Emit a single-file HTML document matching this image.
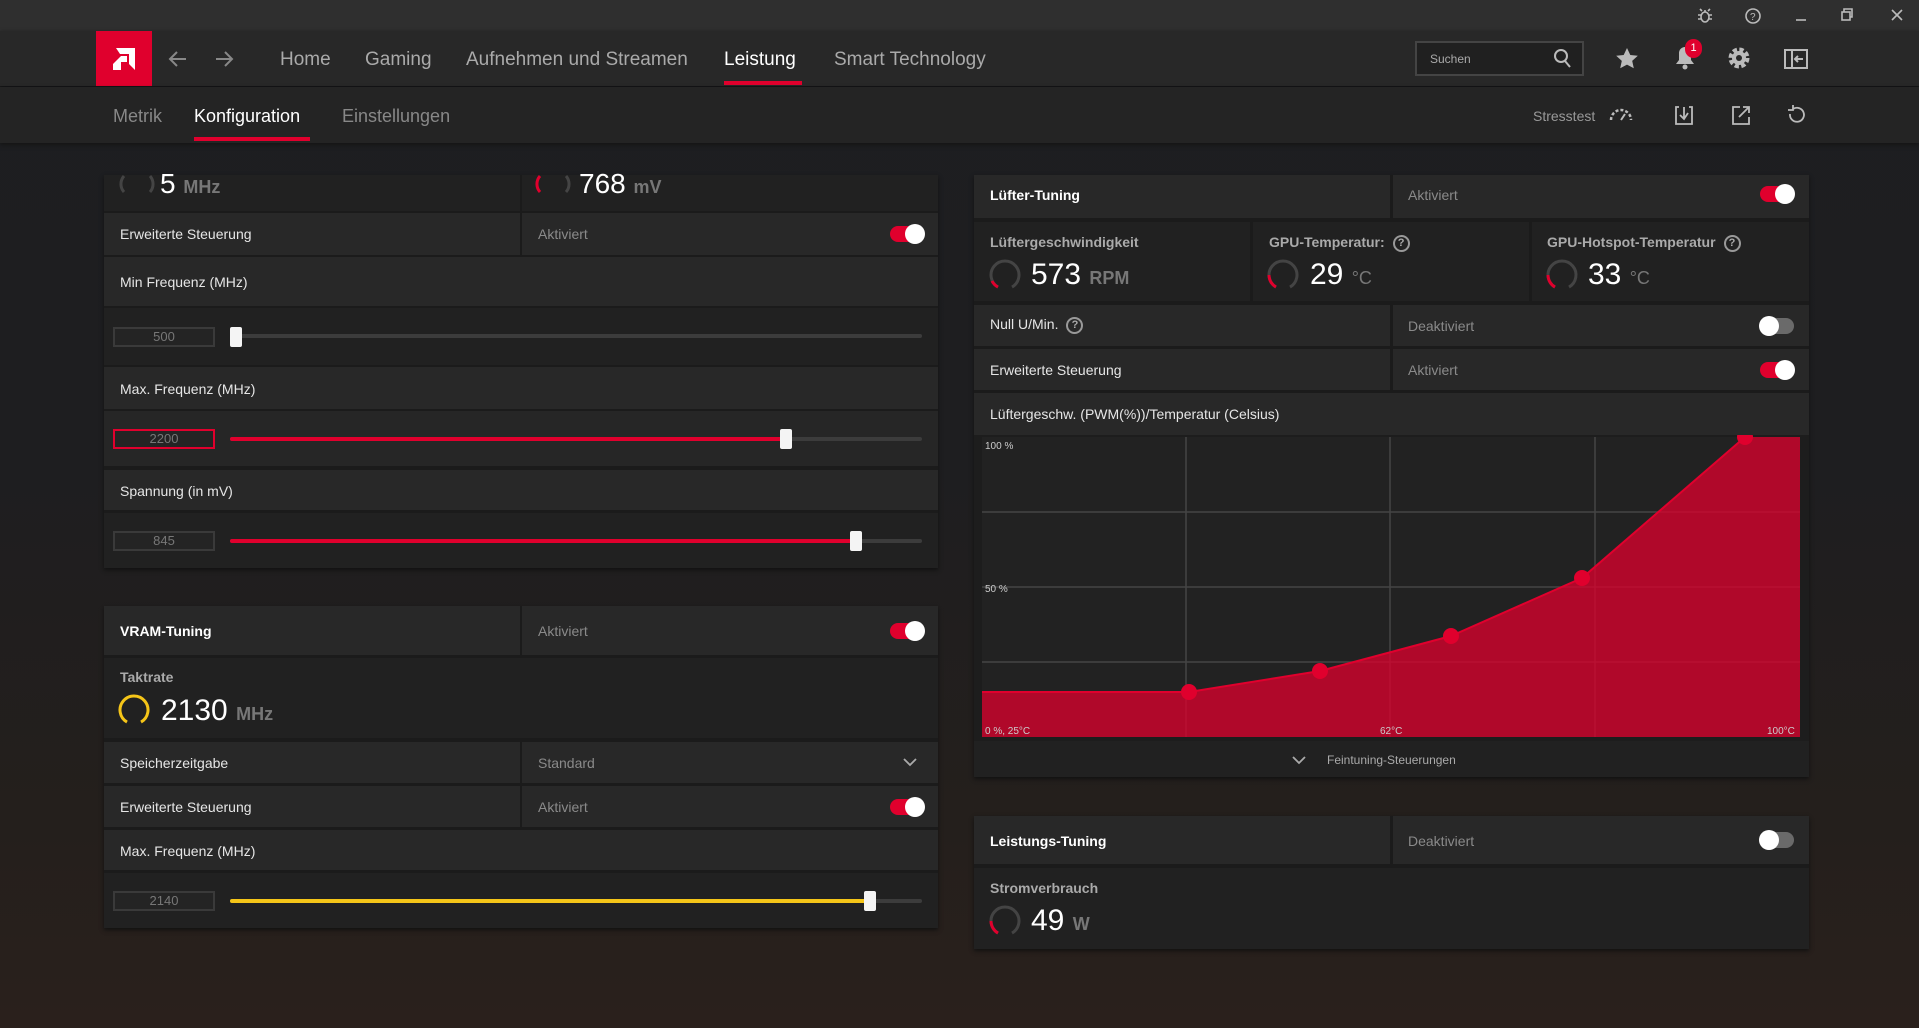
<!DOCTYPE html><html><head><meta charset="utf-8"><style>
*{margin:0;padding:0;box-sizing:border-box}
body{width:1919px;height:1028px;overflow:hidden;font-family:"Liberation Sans",sans-serif;background:linear-gradient(180deg,#1d1e21 0%,#1e1e20 45%,#241f1c 80%,#2a201c 100%);position:relative;color:#ddd}
.a{position:absolute}
.row{position:absolute;background:#282828}
.dk{background:#212121}
.t{position:absolute;font-size:14px;color:#e6e6e6;white-space:nowrap}
.g{color:#8a8a8a}
.b{font-weight:bold;color:#fff}
.tg{position:absolute;width:34px;height:16px;border-radius:8px}
.tg.on{background:#e0002d}.tg.off{background:#6a6a6a}
.tg i{position:absolute;top:-2px;width:20px;height:20px;border-radius:50%;background:#fff}
.tg.on i{right:-1px}.tg.off i{left:-1px}
.box{position:absolute;width:102px;height:20px;border:2px solid #3a3a3a;background:#242424;color:#777;font-size:13px;text-align:center;line-height:16px}
.tr{position:absolute;height:4px;background:#3c3c3c;border-radius:2px}
.fl{position:absolute;height:4px;border-radius:2px}
.th{position:absolute;width:12px;height:20px;background:#f4f4f4;border-radius:2px}
.big{position:absolute;font-size:30px;color:#fff}
.big span{font-size:18px;color:#777;font-weight:bold}
.lbl{position:absolute;font-size:14px;font-weight:bold;color:#aaa}
.q{display:inline-block;width:17px;height:17px;border:2px solid #999;border-radius:50%;font-size:11px;text-align:center;line-height:13px;color:#aaa;font-weight:bold;vertical-align:middle;margin-left:8px}
</style></head><body>
<div class="a" style="left:0;top:0;width:1919px;height:31px;background:#2f2f2f"></div>
<svg class="a" style="left:1696px;top:6px" width="180" height="20" viewBox="0 0 180 20" fill="none" stroke="#bbb" stroke-width="1.6">
<ellipse cx="9" cy="11" rx="4" ry="5"/><path d="M9 6V4M5 9H2M5 13H2M13 9h3M13 13h3M6 5l-2-2M12 5l2-2"/>
<circle cx="57" cy="10" r="7"/><text x="54" y="14" font-size="10" fill="#bbb" stroke="none" font-family="Liberation Sans">?</text>
<path d="M100 14h10"/><rect x="146" y="6" width="8" height="8"/><path d="M148 6V3h8v8h-2"/>
</svg>
<svg class="a" style="left:1890px;top:8px" width="14" height="14" fill="none" stroke="#bbb" stroke-width="1.6"><path d="M2 2l10 10M12 2L2 12"/></svg>
<div class="a" style="left:0;top:31px;width:1919px;height:55px;background:#282828;box-shadow:0 2px 4px #111"></div>
<div class="a" style="left:96px;top:31px;width:56px;height:55px;background:#e0002d"></div>
<svg class="a" style="left:110px;top:45px" width="28" height="28" viewBox="0 0 28 28"><path d="M6 3h19v22l-6-6V9h-9z" fill="#fff"/><path d="M11 11h6v6h-6z M11 11l-8 8v6h8v-8" fill="#fff"/></svg>
<svg class="a" style="left:166px;top:48px" width="70" height="22" viewBox="0 0 70 22" fill="none" stroke="#888" stroke-width="2"><path d="M20 11H4M11 4l-7 7 7 7"/><path d="M50 11h16M59 4l7 7-7 7"/></svg>
<div class="a" style="left:280px;top:49px;font-size:19px;color:#aaa">Home</div>
<div class="a" style="left:365px;top:49px;font-size:19px;color:#aaa">Gaming</div>
<div class="a" style="left:466px;top:49px;font-size:19px;color:#aaa">Aufnehmen und Streamen</div>
<div class="a" style="left:724px;top:49px;font-size:19px;color:#fff">Leistung</div>
<div class="a" style="left:724px;top:81px;width:78px;height:4px;background:#e0002d"></div>
<div class="a" style="left:834px;top:49px;font-size:19px;color:#aaa">Smart Technology</div>
<div class="a" style="left:1415px;top:41px;width:169px;height:35px;border:2px solid #444;background:#202020"></div>
<div class="a" style="left:1430px;top:52px;font-size:12px;color:#aaa">Suchen</div>
<svg class="a" style="left:1553px;top:48px" width="20" height="22" fill="none" stroke="#bbb" stroke-width="2"><circle cx="8" cy="8" r="6"/><path d="M12 13l5 6"/></svg>
<svg class="a" style="left:1615px;top:47px" width="24" height="24" viewBox="0 0 24 24"><path d="M12 1l3.3 7 7.5.8-5.6 5.1 1.6 7.4L12 17.6 5.2 21.3l1.6-7.4L1.2 8.8 8.7 8z" fill="#bbb"/></svg>
<svg class="a" style="left:1672px;top:42px" width="26" height="30" viewBox="0 0 26 30"><path d="M4 22h18l-3-4v-7a6 6 0 0 0-12 0v7z" fill="#bbb"/><circle cx="13" cy="25" r="2.5" fill="#bbb"/></svg>
<div class="a" style="left:1685px;top:39px;width:17px;height:19px;border-radius:9px;background:#e0002d;color:#fff;font-size:11px;text-align:center;line-height:19px">1</div>
<svg class="a" style="left:1726px;top:45px" width="26" height="26" viewBox="0 0 26 26"><circle cx="13" cy="13" r="8" fill="none" stroke="#bbb" stroke-width="5" stroke-dasharray="4 2.3"/><circle cx="13" cy="13" r="7" fill="#bbb"/><circle cx="13" cy="13" r="3" fill="#282828"/></svg>
<svg class="a" style="left:1783px;top:48px" width="26" height="22" fill="none" stroke="#bbb" stroke-width="2"><rect x="2" y="2" width="22" height="18"/><path d="M9 2v18M20 11h-8M15 8l-3 3 3 3"/></svg>
<div class="a" style="left:0;top:87px;width:1919px;height:56px;background:#242424;box-shadow:0 2px 4px #151515"></div>
<div class="a" style="left:113px;top:106px;font-size:18px;color:#888">Metrik</div>
<div class="a" style="left:194px;top:106px;font-size:18px;color:#fff">Konfiguration</div>
<div class="a" style="left:194px;top:137px;width:116px;height:4px;background:#e0002d"></div>
<div class="a" style="left:342px;top:106px;font-size:18px;color:#888">Einstellungen</div>
<div class="a" style="left:1533px;top:108px;font-size:14px;color:#999">Stresstest</div>
<svg class="a" style="left:1608px;top:104px" width="26" height="20" fill="none" stroke="#bbb" stroke-width="2.5" stroke-dasharray="3 2"><path d="M3 16a10 10 0 0 1 20 0"/><path d="M13 16l4-6" stroke-dasharray="none" stroke-width="2"/></svg>
<svg class="a" style="left:1673px;top:104px" width="22" height="22" fill="none" stroke="#bbb" stroke-width="1.8"><path d="M6 3H3v17h16V3h-3M7 11l4 4 4-6M11 3v11"/></svg>
<svg class="a" style="left:1730px;top:104px" width="22" height="22" fill="none" stroke="#bbb" stroke-width="1.8"><path d="M10 3H3v17h16v-7M9 13l10-10M13 3h6v6"/></svg>
<svg class="a" style="left:1785px;top:104px" width="22" height="22" fill="none" stroke="#bbb" stroke-width="1.8"><path d="M5 10a7 7 0 1 0 3-5M8 1v5H3"/></svg>

<div class="a" style="left:104px;top:175px;width:834px;height:393px;background:#1b1b1b;box-shadow:0 2px 4px #111"></div>
<div class="row dk" style="left:104px;top:175px;width:416px;height:36px"></div>
<div class="row dk" style="left:522px;top:175px;width:416px;height:36px"></div>
<svg class="a" style="left:118px;top:172px" width="40" height="24" fill="none" stroke="#444" stroke-width="3"><path d="M6 4a12 12 0 0 0 0 16M32 4a12 12 0 0 1 0 16"/></svg>
<div class="big" style="left:160px;top:168px;font-size:28px">5 <span>MHz</span></div>
<svg class="a" style="left:534px;top:172px" width="40" height="24" fill="none" stroke-width="3"><path d="M6 4a12 12 0 0 0 0 16" stroke="#e0002d"/><path d="M32 4a12 12 0 0 1 0 16" stroke="#444"/></svg>
<div class="big" style="left:579px;top:168px;font-size:28px">768 <span>mV</span></div>
<div class="row" style="left:104px;top:213px;width:416px;height:42px"></div>
<div class="row" style="left:522px;top:213px;width:416px;height:42px"></div>
<div class="t" style="left:120px;top:226px">Erweiterte Steuerung</div>
<div class="t g" style="left:538px;top:226px">Aktiviert</div>
<div class="tg on" style="left:890px;top:226px"><i></i></div>
<div class="row" style="left:104px;top:257px;width:834px;height:49px"></div>
<div class="t" style="left:120px;top:274px">Min Frequenz (MHz)</div>
<div class="row dk" style="left:104px;top:308px;width:834px;height:57px"></div>
<div class="box" style="left:113px;top:327px">500</div>
<div class="tr" style="left:230px;top:334px;width:692px"></div>
<div class="th" style="left:230px;top:327px"></div>
<div class="row" style="left:104px;top:367px;width:834px;height:42px"></div>
<div class="t" style="left:120px;top:381px">Max. Frequenz (MHz)</div>
<div class="row" style="left:104px;top:411px;width:834px;height:55px;background:#262626"></div>
<div class="box" style="left:113px;top:429px;border-color:#e0002d">2200</div>
<div class="tr" style="left:230px;top:437px;width:692px"></div>
<div class="fl" style="left:230px;top:437px;width:556px;background:#e0002d"></div>
<div class="th" style="left:780px;top:429px"></div>
<div class="row" style="left:104px;top:470px;width:834px;height:40px"></div>
<div class="t" style="left:120px;top:483px">Spannung (in mV)</div>
<div class="row dk" style="left:104px;top:513px;width:834px;height:55px"></div>
<div class="box" style="left:113px;top:531px">845</div>
<div class="tr" style="left:230px;top:539px;width:692px"></div>
<div class="fl" style="left:230px;top:539px;width:626px;background:#e0002d"></div>
<div class="th" style="left:850px;top:531px"></div>

<div class="a" style="left:104px;top:606px;width:834px;height:322px;background:#1b1b1b;box-shadow:0 2px 4px #111"></div>
<div class="row" style="left:104px;top:606px;width:416px;height:49px"></div>
<div class="row" style="left:522px;top:606px;width:416px;height:49px"></div>
<div class="t b" style="left:120px;top:623px">VRAM-Tuning</div>
<div class="t g" style="left:538px;top:623px">Aktiviert</div>
<div class="tg on" style="left:890px;top:623px"><i></i></div>
<div class="row dk" style="left:104px;top:658px;width:834px;height:80px"></div>
<div class="lbl" style="left:120px;top:669px">Taktrate</div>
<svg class="a" style="left:116px;top:692px" width="36" height="36" fill="none" stroke="#f5c518" stroke-width="3"><path d="M11 30.1A14 14 0 1 1 25 30.1"/></svg>
<div class="big" style="left:161px;top:694px">2130 <span>MHz</span></div>
<div class="row" style="left:104px;top:742px;width:416px;height:41px"></div>
<div class="row" style="left:522px;top:742px;width:416px;height:41px"></div>
<div class="t" style="left:120px;top:755px">Speicherzeitgabe</div>
<div class="t g" style="left:538px;top:755px">Standard</div>
<svg class="a" style="left:902px;top:756px" width="16" height="12" fill="none" stroke="#aaa" stroke-width="1.8"><path d="M2 3l6 6 6-6"/></svg>
<div class="row" style="left:104px;top:786px;width:416px;height:41px"></div>
<div class="row" style="left:522px;top:786px;width:416px;height:41px"></div>
<div class="t" style="left:120px;top:799px">Erweiterte Steuerung</div>
<div class="t g" style="left:538px;top:799px">Aktiviert</div>
<div class="tg on" style="left:890px;top:799px"><i></i></div>
<div class="row" style="left:104px;top:830px;width:834px;height:40px"></div>
<div class="t" style="left:120px;top:843px">Max. Frequenz (MHz)</div>
<div class="row dk" style="left:104px;top:873px;width:834px;height:55px"></div>
<div class="box" style="left:113px;top:891px">2140</div>
<div class="tr" style="left:230px;top:899px;width:692px"></div>
<div class="fl" style="left:230px;top:899px;width:640px;background:#f5c518"></div>
<div class="th" style="left:864px;top:891px"></div>

<div class="a" style="left:974px;top:175px;width:835px;height:602px;background:#1b1b1b;box-shadow:0 2px 4px #111"></div>
<div class="row" style="left:974px;top:175px;width:416px;height:43px"></div>
<div class="row" style="left:1393px;top:175px;width:416px;height:43px"></div>
<div class="t b" style="left:990px;top:187px">Lüfter-Tuning</div>
<div class="t g" style="left:1408px;top:187px">Aktiviert</div>
<div class="tg on" style="left:1760px;top:186px"><i></i></div>
<div class="row dk" style="left:974px;top:222px;width:276px;height:79px"></div>
<div class="row dk" style="left:1253px;top:222px;width:276px;height:79px"></div>
<div class="row dk" style="left:1532px;top:222px;width:277px;height:79px"></div>
<div class="lbl" style="left:990px;top:234px">Lüftergeschwindigkeit</div>
<div class="lbl" style="left:1269px;top:234px">GPU-Temperatur:<span class="q">?</span></div>
<div class="lbl" style="left:1547px;top:234px">GPU-Hotspot-Temperatur<span class="q">?</span></div>
<svg class="a" style="left:987px;top:257px" width="36" height="36" fill="none" stroke-width="3"><path d="M11 30.1A14 14 0 1 1 25 30.1" stroke="#444"/><path d="M11 30.1A14 14 0 0 1 5 24" stroke="#e0002d"/></svg>
<div class="big" style="left:1031px;top:258px">573 <span>RPM</span></div>
<svg class="a" style="left:1265px;top:257px" width="36" height="36" fill="none" stroke-width="3"><path d="M11 30.1A14 14 0 1 1 25 30.1" stroke="#444"/><path d="M11 30.1A14 14 0 0 1 4 18" stroke="#e0002d"/></svg>
<div class="big" style="left:1310px;top:258px">29 <span style="font-weight:normal">°C</span></div>
<svg class="a" style="left:1544px;top:257px" width="36" height="36" fill="none" stroke-width="3"><path d="M11 30.1A14 14 0 1 1 25 30.1" stroke="#444"/><path d="M11 30.1A14 14 0 0 1 4 18" stroke="#e0002d"/></svg>
<div class="big" style="left:1588px;top:258px">33 <span style="font-weight:normal">°C</span></div>
<div class="row" style="left:974px;top:305px;width:416px;height:41px"></div>
<div class="row" style="left:1393px;top:305px;width:416px;height:41px"></div>
<div class="t" style="left:990px;top:316px">Null U/Min.<span class="q">?</span></div>
<div class="t g" style="left:1408px;top:318px">Deaktiviert</div>
<div class="tg off" style="left:1760px;top:318px"><i></i></div>
<div class="row" style="left:974px;top:349px;width:416px;height:41px"></div>
<div class="row" style="left:1393px;top:349px;width:416px;height:41px"></div>
<div class="t" style="left:990px;top:362px">Erweiterte Steuerung</div>
<div class="t g" style="left:1408px;top:362px">Aktiviert</div>
<div class="tg on" style="left:1760px;top:362px"><i></i></div>
<div class="row" style="left:974px;top:393px;width:835px;height:42px"></div>
<div class="t" style="left:990px;top:406px">Lüftergeschw. (PWM(%))/Temperatur (Celsius)</div>
<svg class="a" style="left:974px;top:435px" width="835" height="306" viewBox="974 435 835 306">
<rect x="974" y="435" width="835" height="306" fill="#1d1d1d"/>
<rect x="982" y="437" width="818" height="300" fill="#222"/>
<g stroke="#444" stroke-width="1.5"><path d="M1186 437v300M1390 437v300M1595 437v300M982 512h818M982 587h818M982 662h818"/></g>
<path d="M982 692L1189 692L1320 671L1451 636L1582 578L1745 437L1800 437L1800 737L982 737Z" fill="#e0002d" fill-opacity="0.75"/>
<path d="M982 692L1189 692L1320 671L1451 636L1582 578L1745 437" fill="none" stroke="#e0002d" stroke-width="2"/>
<g fill="#e0002d"><circle cx="1189" cy="692" r="8"/><circle cx="1320" cy="671" r="8"/><circle cx="1451" cy="636" r="8"/><circle cx="1582" cy="578" r="8"/><circle cx="1745" cy="437" r="8"/></g>
<g font-family="Liberation Sans" font-size="10" fill="#ccc"><text x="985" y="449">100 %</text><text x="985" y="592">50 %</text><text x="985" y="734">0 %, 25°C</text><text x="1380" y="734">62°C</text><text x="1767" y="734">100°C</text></g>
</svg>
<div class="row dk" style="left:974px;top:741px;width:835px;height:36px"></div>
<svg class="a" style="left:1291px;top:754px" width="16" height="12" fill="none" stroke="#aaa" stroke-width="1.8"><path d="M2 3l6 6 6-6"/></svg>
<div class="t g" style="left:1327px;top:753px;font-size:12px;color:#aaa">Feintuning-Steuerungen</div>

<div class="a" style="left:974px;top:816px;width:835px;height:133px;background:#1b1b1b;box-shadow:0 2px 4px #111"></div>
<div class="row" style="left:974px;top:816px;width:416px;height:48px"></div>
<div class="row" style="left:1393px;top:816px;width:416px;height:48px"></div>
<div class="t b" style="left:990px;top:833px">Leistungs-Tuning</div>
<div class="t g" style="left:1408px;top:833px">Deaktiviert</div>
<div class="tg off" style="left:1760px;top:832px"><i></i></div>
<div class="row dk" style="left:974px;top:868px;width:835px;height:81px"></div>
<div class="lbl" style="left:990px;top:880px">Stromverbrauch</div>
<svg class="a" style="left:987px;top:903px" width="36" height="36" fill="none" stroke-width="3"><path d="M11 30.1A14 14 0 1 1 25 30.1" stroke="#444"/><path d="M11 30.1A14 14 0 0 1 4 18" stroke="#e0002d"/></svg>
<div class="big" style="left:1031px;top:904px">49 <span>W</span></div>
</body></html>
